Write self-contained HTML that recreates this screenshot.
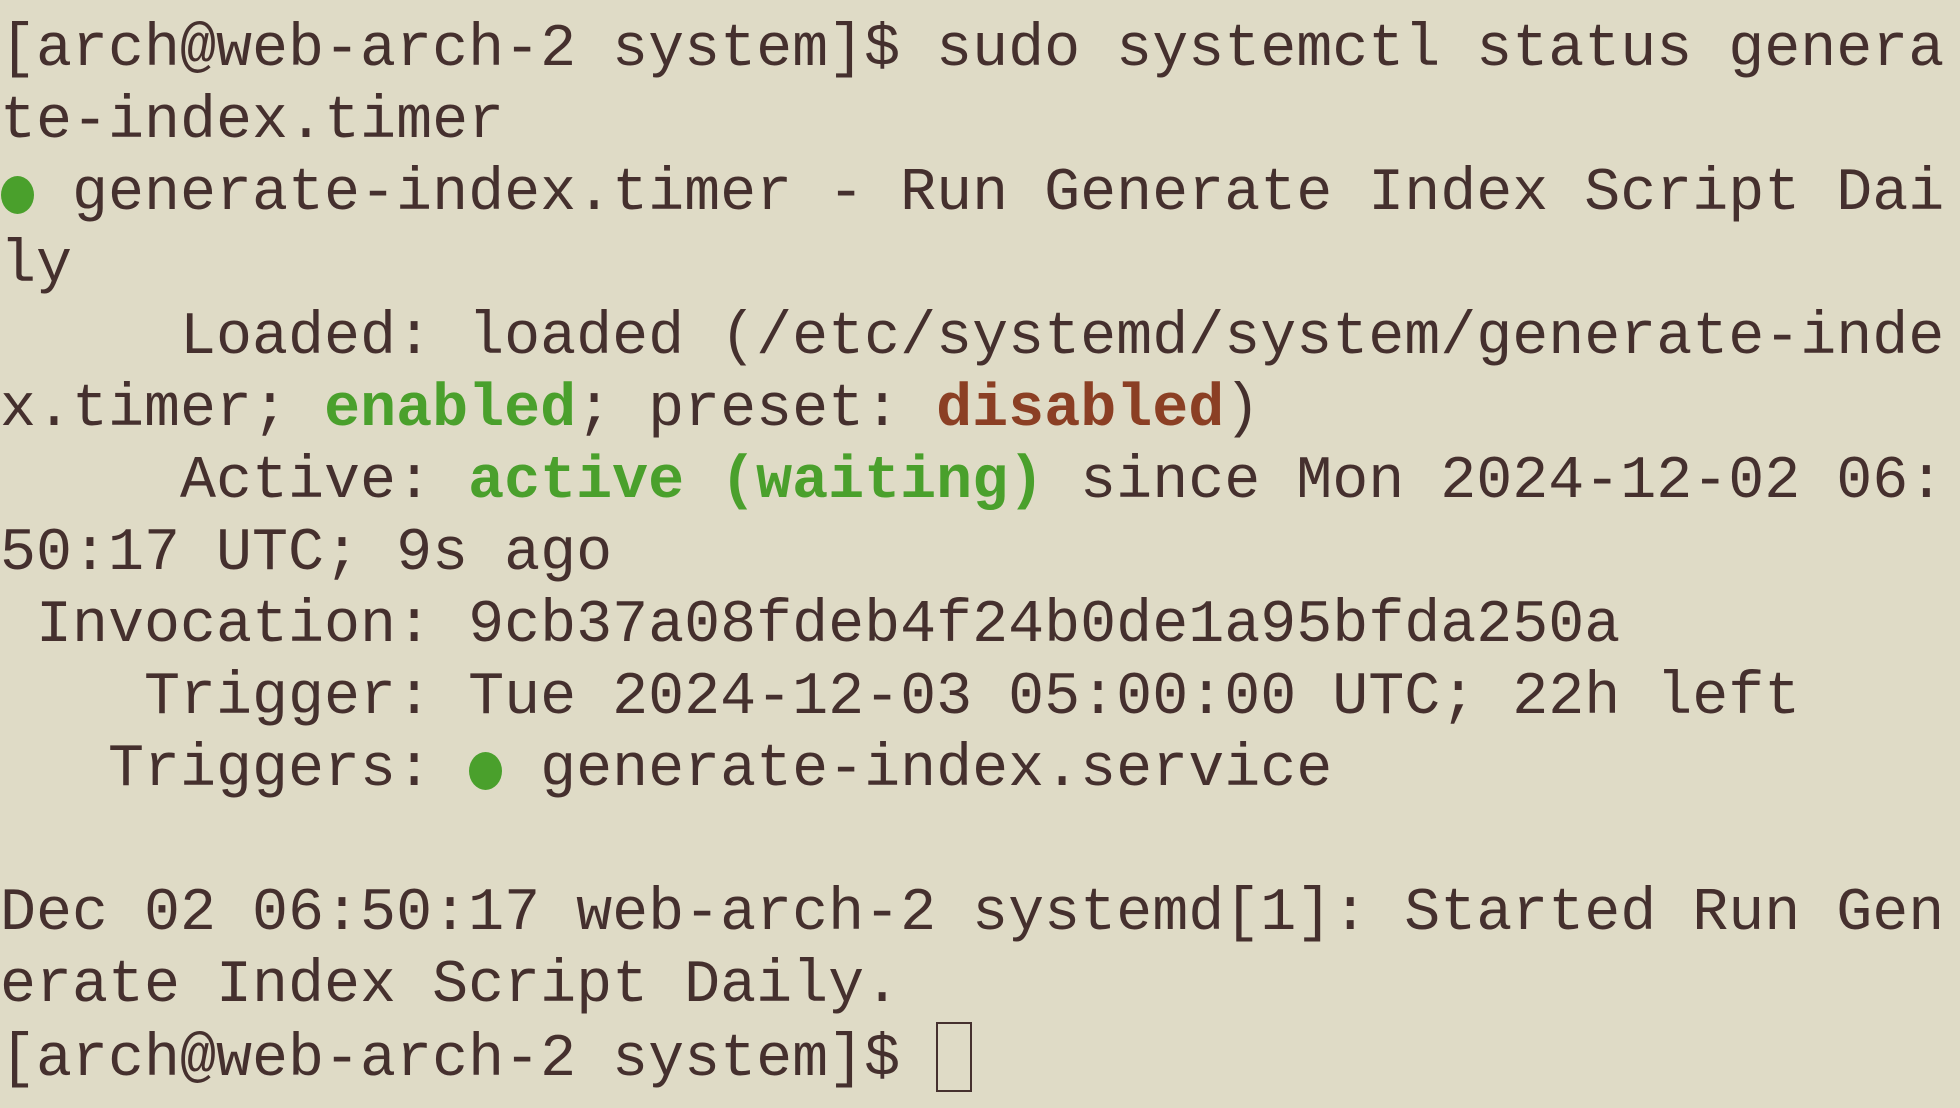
<!DOCTYPE html>
<html><head><meta charset="utf-8"><style>
html,body{margin:0;padding:0;background:#dfdbc6;width:1960px;height:1108px;overflow:hidden}
pre{margin:0;padding:14px 0 0 0;font-family:"Liberation Mono","Courier New",monospace;font-size:60px;line-height:72px;color:#45302e;white-space:pre;letter-spacing:0}
.g{color:#4aa02c;font-weight:bold}
.r{color:#8b3f24;font-weight:bold}
.b{display:inline-block;width:36px;height:72px;vertical-align:top;position:relative}
.b::after{content:"";position:absolute;left:1px;top:18px;width:33px;height:38px;border-radius:50%;background:#4aa02c}
.cur{display:inline-block;width:36px;height:70px;border:2px solid #45302e;box-sizing:border-box;vertical-align:-17px}
</style></head><body><pre>[arch@web-arch-2 system]$ sudo systemctl status genera
te-index.timer
<span class="b"></span> generate-index.timer - Run Generate Index Script Dai
ly
     Loaded: loaded (/etc/systemd/system/generate-inde
x.timer; <span class="g">enabled</span>; preset: <span class="r">disabled</span>)
     Active: <span class="g">active (waiting)</span> since Mon 2024-12-02 06:
50:17 UTC; 9s ago
 Invocation: 9cb37a08fdeb4f24b0de1a95bfda250a
    Trigger: Tue 2024-12-03 05:00:00 UTC; 22h left
   Triggers: <span class="b"></span> generate-index.service

Dec 02 06:50:17 web-arch-2 systemd[1]: Started Run Gen
erate Index Script Daily.
[arch@web-arch-2 system]$ <span class="cur"></span></pre></body></html>
